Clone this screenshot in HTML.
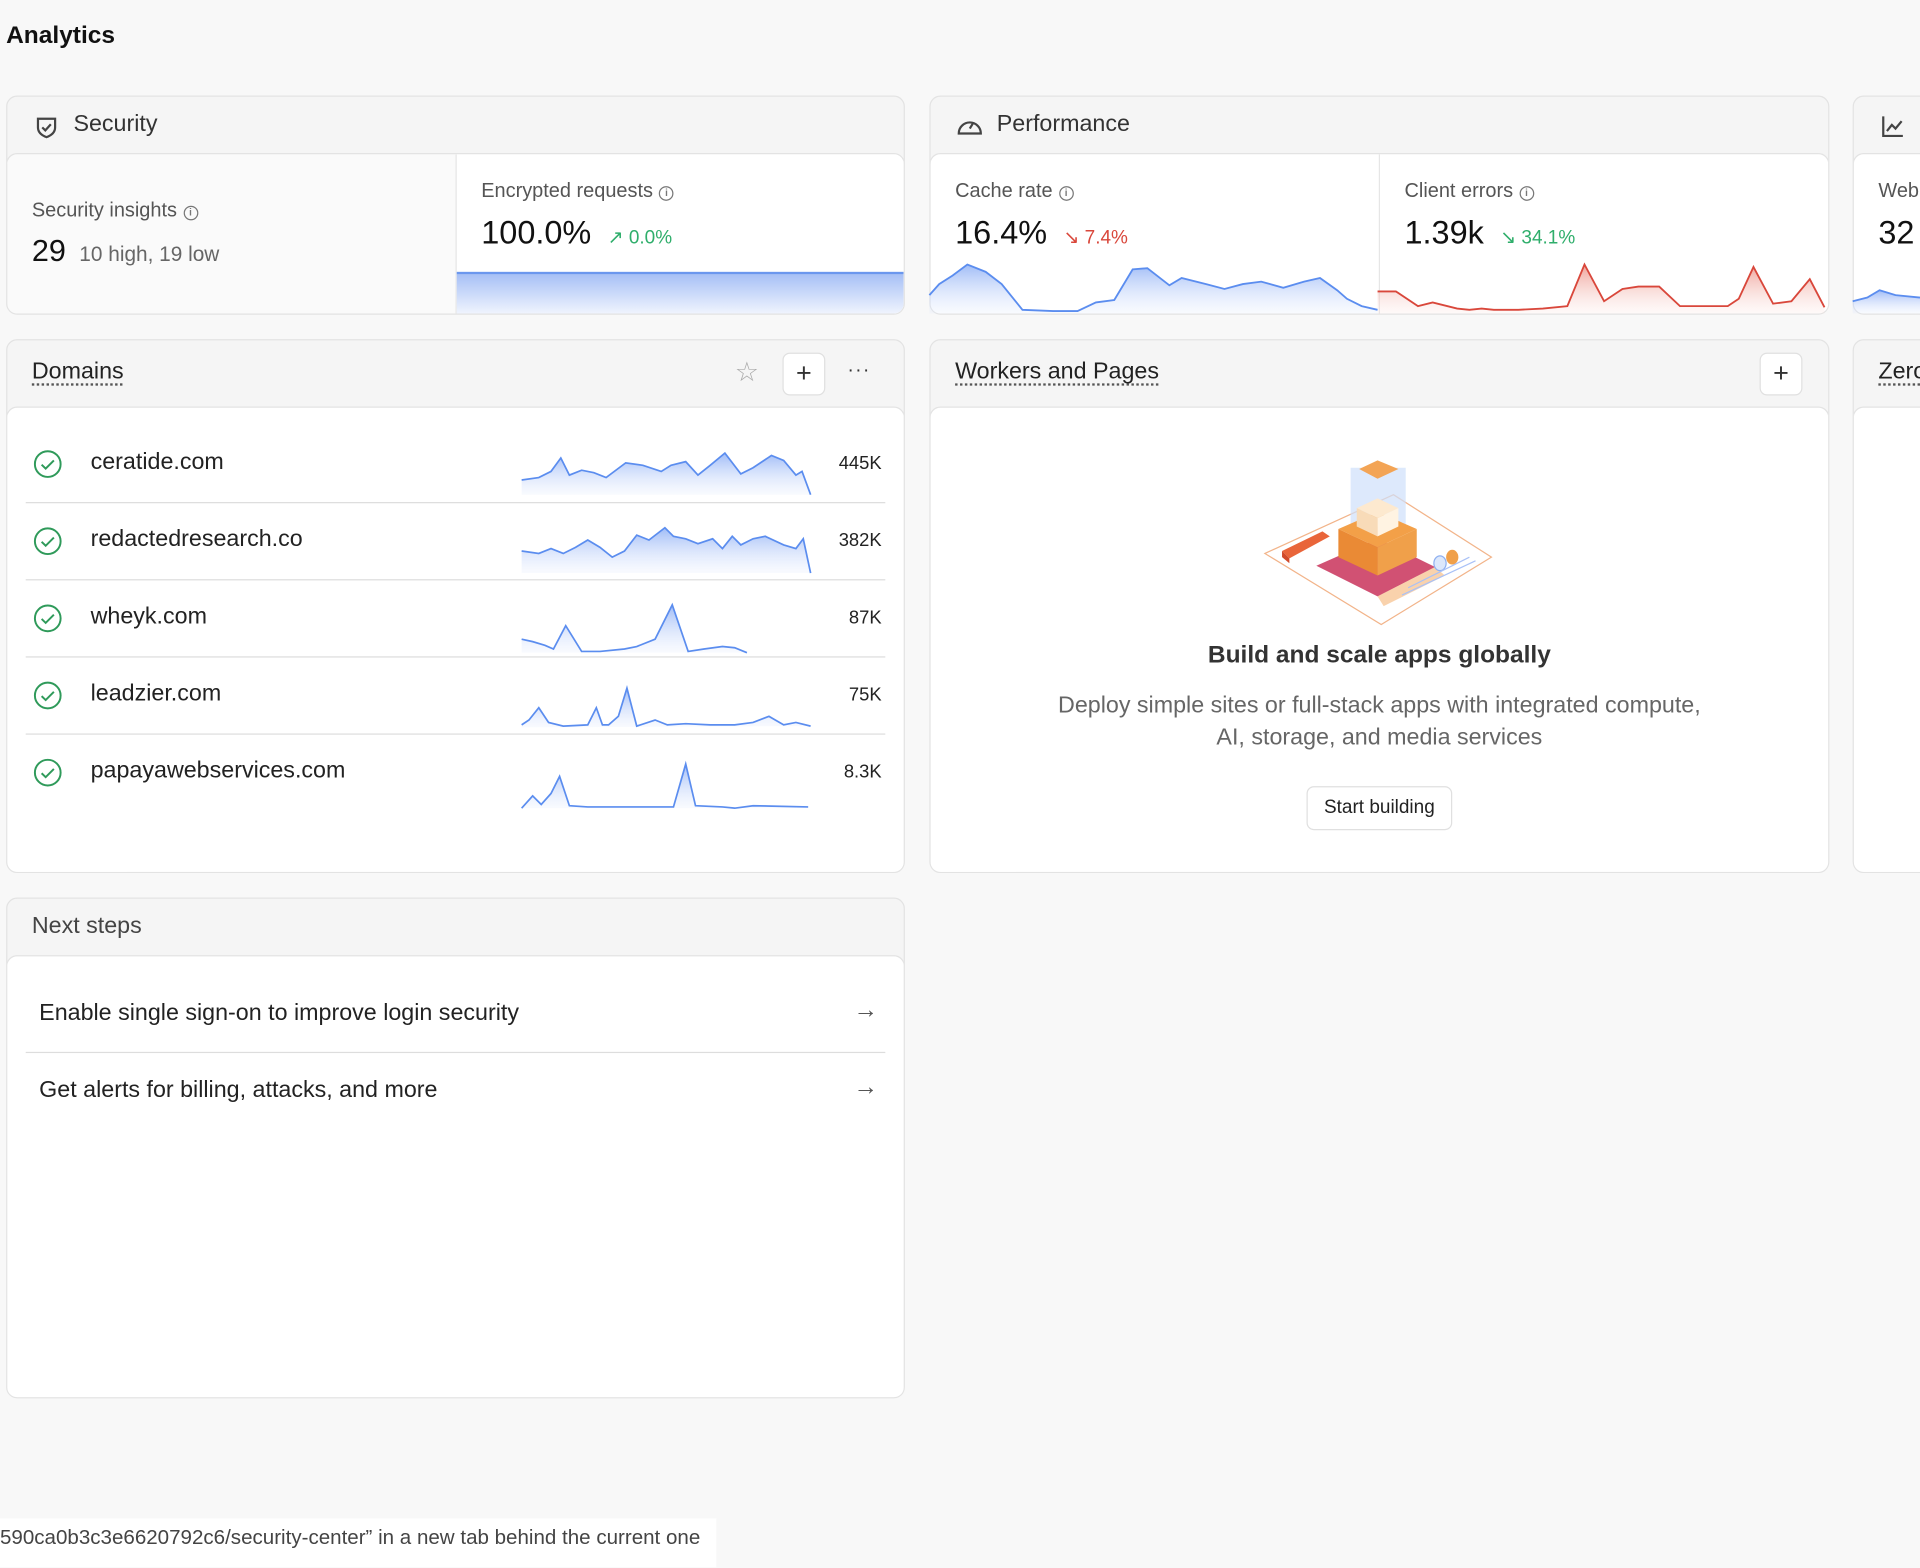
<!DOCTYPE html>
<html><head><meta charset="utf-8"><style>
*{box-sizing:border-box;margin:0;padding:0}
html,body{width:1920px;height:1568px;overflow:hidden;background:#f8f8f8}
body{font-family:"Liberation Sans",sans-serif;color:#222}
#w{position:absolute;left:0;top:0;width:1568px;height:1280px;transform:scale(1.22449);transform-origin:0 0}
.a{position:absolute}
.card{position:absolute;border:1px solid #e3e3e3;border-radius:9px;background:#f5f5f5;overflow:hidden}
.body{position:absolute;left:-1px;right:-1px;bottom:-1px;background:#fff;border:1px solid #e3e3e3;border-radius:9px;overflow:hidden}
.ht{font-size:19px;color:#333}
.ul{text-decoration:underline dotted #555;text-underline-offset:5px;color:#222}
.lbl{font-size:16.3px;color:#555}
.big{font-size:26.5px;color:#111}
.i{display:inline-block;width:12px;height:12px;border:1.3px solid #777;border-radius:50%;font-size:8px;line-height:10px;text-align:center;color:#777;vertical-align:1px;margin-left:5px;font-weight:bold}
.row{position:absolute;left:15px;right:15px;height:63px;border-bottom:1px solid #ddd}
.row .nm{position:absolute;left:53px;top:19px;font-size:19px}
.row .v{position:absolute;right:3px;top:22px;font-size:15px}
.row svg.c{position:absolute;left:6px;top:19px}
.btn{position:absolute;background:#fff;border:1px solid #e0e0e0;border-radius:6px;text-align:center}
</style></head><body><div id="w">
<svg width="0" height="0" class="a"><defs>
<linearGradient id="gb" x1="0" y1="0" x2="0" y2="1"><stop offset="0" stop-color="#8fb0f5" stop-opacity=".85"/><stop offset="1" stop-color="#dfe8fd" stop-opacity=".2"/></linearGradient>
<linearGradient id="gr" x1="0" y1="0" x2="0" y2="1"><stop offset="0" stop-color="#eb8b80" stop-opacity=".8"/><stop offset="1" stop-color="#fbe3e0" stop-opacity=".2"/></linearGradient>
</defs></svg>

<div class="a" style="left:5px;top:18px;font-size:20px;font-weight:bold;color:#111">Analytics</div>

<!-- Security -->
<div class="card" style="left:5px;top:78px;width:734px;height:179px">
 <svg class="a" style="left:22px;top:15px" width="20" height="20" viewBox="0 0 20 20" fill="none" stroke="#444" stroke-width="1.8"><path d="M3 3h14v7c0 4-3 6.5-7 8-4-1.5-7-4-7-8z"/><path d="M6.5 10l2.5 2.5 4.5-5"/></svg>
 <div class="a ht" style="left:54px;top:12px">Security</div>
 <div class="body" style="top:46px;height:133px;background:#fafafa">
  <div class="a lbl" style="left:20px;top:37px">Security insights<span class="i">i</span></div>
  <div class="a" style="left:20px;top:65px;font-size:25px;color:#111">29 <span style="font-size:17px;color:#666;margin-left:4px">10 high, 19 low</span></div>
  <div class="a" style="left:366px;top:0;right:0;bottom:0;background:#fff;border-left:1px solid #e6e6e6">
   <div class="a lbl" style="left:20px;top:21px">Encrypted requests<span class="i">i</span></div>
   <div class="a big" style="left:20px;top:49px">100.0% <span style="font-size:15.5px;color:#2fae6b;margin-left:6px">↗ 0.0%</span></div>
   <div class="a" style="left:0;right:0;top:96px;height:36px;border-top:2px solid #6b97ee;background:linear-gradient(#a7c0f6,#f4f7fe)"></div>
  </div>
 </div>
</div>

<!-- Performance -->
<div class="card" style="left:759px;top:78px;width:735px;height:179px">
 <svg class="a" style="left:21px;top:14px" width="22" height="20" viewBox="0 0 22 20" fill="none" stroke="#444" stroke-width="1.8"><path d="M2 16a9 9 0 1 1 18 0z"/><path d="M11 12l3-5"/></svg>
 <div class="a ht" style="left:54px;top:12px">Performance</div>
 <div class="body" style="top:46px;height:133px">
  <div class="a lbl" style="left:20px;top:21px">Cache rate<span class="i">i</span></div>
  <div class="a big" style="left:20px;top:49px">16.4% <span style="font-size:15.5px;color:#d9473b;margin-left:6px">↘ 7.4%</span></div>
  <div class="a" style="left:366px;top:0;bottom:0;border-left:1px solid #e6e6e6"></div>
  <div class="a lbl" style="left:387px;top:21px">Client errors<span class="i">i</span></div>
  <div class="a big" style="left:387px;top:49px">1.39k <span style="font-size:15.5px;color:#2fae6b;margin-left:6px">↘ 34.1%</span></div>
 </div>
</div>
<svg class="a" style="left:0;top:0" width="1568" height="260">
<polygon fill="url(#gb)" points="759,256 759,241 767,232 778,225 790,216 805,222 818,232 835,253 860,254 880,254 895,247 910,245 925,220 937,219 955,233 965,227 985,232 1000,236 1015,232 1030,230 1048,235 1065,230 1078,227 1092,237 1100,244 1112,250 1125,253 1125,256"/>
<polyline fill="none" stroke="#5b8def" stroke-width="1.5" points="759,241 767,232 778,225 790,216 805,222 818,232 835,253 860,254 880,254 895,247 910,245 925,220 937,219 955,233 965,227 985,232 1000,236 1015,232 1030,230 1048,235 1065,230 1078,227 1092,237 1100,244 1112,250 1125,253"/>
<polygon fill="url(#gr)" points="1125,256 1125,238 1140,238 1158,250 1170,247 1190,252 1200,253 1210,252 1220,253 1240,253 1260,252 1280,250 1294,216 1310,246 1325,236 1338,234 1355,234 1372,250 1393,250 1411,250 1420,244 1432,218 1448,248 1463,246 1478,228 1490,251 1490,256"/>
<polyline fill="none" stroke="#d9473b" stroke-width="1.5" points="1125,238 1140,238 1158,250 1170,247 1190,252 1200,253 1210,252 1220,253 1240,253 1260,252 1280,250 1294,216 1310,246 1325,236 1338,234 1355,234 1372,250 1393,250 1411,250 1420,244 1432,218 1448,248 1463,246 1478,228 1490,251"/>
</svg>

<!-- third card -->
<div class="card" style="left:1513px;top:78px;width:120px;height:179px">
 <svg class="a" style="left:22px;top:14px" width="20" height="20" viewBox="0 0 20 20" fill="none" stroke="#444" stroke-width="1.8"><path d="M2 2v16h16"/><path d="M5 14l4-5 3 3 5-6"/></svg>
 <div class="body" style="top:46px;height:133px">
  <div class="a lbl" style="left:20px;top:21px">Web</div>
  <div class="a big" style="left:20px;top:49px">32</div>
 </div>
</div>
<svg class="a" style="left:0;top:0" width="1568" height="260"><polygon fill="url(#gb)" points="1513,256 1513,246 1525,243 1535,237 1548,241 1568,243 1568,256"/><polyline fill="none" stroke="#5b8def" stroke-width="1.5" points="1513,246 1525,243 1535,237 1548,241 1568,243"/></svg>
<div class="card" style="left:1513px;top:277px;width:120px;height:436px">
 <div class="a ht ul" style="left:20px;top:15px">Zero</div>
 <div class="body" style="top:54px;height:382px"></div>
</div>

<!-- Domains -->
<div class="card" style="left:5px;top:277px;width:734px;height:436px">
 <div class="a ht ul" style="left:20px;top:15px">Domains</div>
 <div class="a" style="left:594px;top:13px;font-size:22px;color:#aaa">☆</div>
 <div class="btn" style="left:633px;top:10px;width:35px;height:35px;font-size:22px;line-height:32px;color:#333">+</div>
 <div class="a" style="left:686px;top:16px;font-size:16px;color:#333;letter-spacing:1px">···</div>
 <div class="body" style="top:54px;height:382px">
  <div class="row" style="top:15px">
   <svg class="c" width="24" height="24"><circle cx="12" cy="12" r="10.5" fill="none" stroke="#2f9a5a" stroke-width="1.6"/><path d="M7 12.5l3.3 3.2L17 9" fill="none" stroke="#2f9a5a" stroke-width="1.6"/></svg>
   <div class="nm">ceratide.com</div><div class="v">445K</div>
  </div>
  <div class="row" style="top:78px">
   <svg class="c" width="24" height="24"><circle cx="12" cy="12" r="10.5" fill="none" stroke="#2f9a5a" stroke-width="1.6"/><path d="M7 12.5l3.3 3.2L17 9" fill="none" stroke="#2f9a5a" stroke-width="1.6"/></svg>
   <div class="nm">redactedresearch.co</div><div class="v">382K</div>
  </div>
  <div class="row" style="top:141px">
   <svg class="c" width="24" height="24"><circle cx="12" cy="12" r="10.5" fill="none" stroke="#2f9a5a" stroke-width="1.6"/><path d="M7 12.5l3.3 3.2L17 9" fill="none" stroke="#2f9a5a" stroke-width="1.6"/></svg>
   <div class="nm">wheyk.com</div><div class="v">87K</div>
  </div>
  <div class="row" style="top:204px">
   <svg class="c" width="24" height="24"><circle cx="12" cy="12" r="10.5" fill="none" stroke="#2f9a5a" stroke-width="1.6"/><path d="M7 12.5l3.3 3.2L17 9" fill="none" stroke="#2f9a5a" stroke-width="1.6"/></svg>
   <div class="nm">leadzier.com</div><div class="v">75K</div>
  </div>
  <div class="row" style="top:267px;border-bottom:none">
   <svg class="c" width="24" height="24"><circle cx="12" cy="12" r="10.5" fill="none" stroke="#2f9a5a" stroke-width="1.6"/><path d="M7 12.5l3.3 3.2L17 9" fill="none" stroke="#2f9a5a" stroke-width="1.6"/></svg>
   <div class="nm">papayawebservices.com</div><div class="v">8.3K</div>
  </div>
 </div>
</div>
<svg class="a" style="left:0;top:0" width="740" height="720">
<g fill="url(#gb)">
<polygon points="426,404 426,392 440,390 450,385 458,374 465,388 475,384 485,386 495,390 511,378 525,380 540,385 548,380 560,377 570,388 580,380 592,370 605,387 615,382 630,372 640,376 650,388 655,385 662,404"/>
<polygon points="426,468 426,450 440,452 450,448 460,452 470,447 480,441 490,447 500,455 510,450 520,437 530,441 543,431 550,438 560,440 570,444 582,440 590,448 598,438 605,445 615,440 625,438 640,445 650,448 656,440 662,468"/>
<polygon points="426,533 426,522 435,524 445,527 452,530 462,511 475,532 490,532 510,530 520,528 535,522 549,494 562,532 575,530 590,528 600,529 610,533"/>
<polygon points="426,594 426,592 432,588 440,578 448,590 460,593 480,592 487,578 492,592 497,592 505,585 512,562 520,593 535,588 545,592 560,591 580,592 600,592 615,590 628,585 640,592 650,590 662,593"/>
<polygon points="426,660 435,650 442,657 450,648 457,634 465,658 480,659 550,659 560,624 568,658 590,659 600,660 615,658 660,659 660,660"/>
</g>
<g fill="none" stroke="#5b8def" stroke-width="1.4">
<polyline points="426,392 440,390 450,385 458,374 465,388 475,384 485,386 495,390 511,378 525,380 540,385 548,380 560,377 570,388 580,380 592,370 605,387 615,382 630,372 640,376 650,388 655,385 662,404"/>
<polyline points="426,450 440,452 450,448 460,452 470,447 480,441 490,447 500,455 510,450 520,437 530,441 543,431 550,438 560,440 570,444 582,440 590,448 598,438 605,445 615,440 625,438 640,445 650,448 656,440 662,468"/>
<polyline points="426,522 435,524 445,527 452,530 462,511 475,532 490,532 510,530 520,528 535,522 549,494 562,532 575,530 590,528 600,529 610,533"/>
<polyline points="426,592 432,588 440,578 448,590 460,593 480,592 487,578 492,592 497,592 505,585 512,562 520,593 535,588 545,592 560,591 580,592 600,592 615,590 628,585 640,592 650,590 662,593"/>
<polyline points="426,660 435,650 442,657 450,648 457,634 465,658 480,659 550,659 560,624 568,658 590,659 600,660 615,658 660,659"/>
</g></svg>

<!-- Workers -->
<div class="card" style="left:759px;top:277px;width:735px;height:436px">
 <div class="a ht ul" style="left:20px;top:15px">Workers and Pages</div>
 <div class="btn" style="left:677px;top:10px;width:35px;height:35px;font-size:22px;line-height:32px;color:#333">+</div>
 <div class="body" style="top:54px;height:382px;text-align:center">
  <div class="a" style="left:0;right:0;top:191px;font-size:20px;font-weight:bold;color:#333">Build and scale apps globally</div>
  <div class="a" style="left:0;right:0;top:231px;font-size:19px;color:#666;line-height:26px">Deploy simple sites or full-stack apps with integrated compute,<br>AI, storage, and media services</div>
  <div class="btn" style="left:307px;top:309px;width:119px;height:36px;font-size:15.5px;line-height:34px;color:#222">Start building</div>
 </div>
</div>
<svg class="a" style="left:0;top:0" width="1568" height="520">
<polygon points="1033,452 1138,404 1218,455 1128,510" fill="none" stroke="#f2b48a" stroke-width="1"/>
<polygon points="1075,462 1125,440 1172,463 1125,487" fill="#c9325a" opacity=".85"/>
<polygon points="1125,487 1172,463 1180,470 1130,495" fill="#f4a55a" opacity=".5"/>
<rect x="1103" y="382" width="45" height="52" fill="#cfe0fb" opacity=".7"/>
<polygon points="1093,432 1125,418 1157,432 1125,447" fill="#f3a048"/>
<polygon points="1093,432 1125,447 1125,470 1093,455" fill="#ea8a35"/>
<polygon points="1125,447 1157,432 1157,455 1125,470" fill="#f0a04a"/>
<polygon points="1108,415 1125,407 1142,415 1125,423" fill="#fde9cf"/>
<polygon points="1108,415 1125,423 1125,438 1108,430" fill="#f8dbb8"/>
<polygon points="1125,423 1142,415 1142,430 1125,438" fill="#fff3e2"/>
<polygon points="1110,383 1125,376 1142,383 1125,391" fill="#f3a455"/>
<polygon points="1047,450 1080,434 1086,438 1053,456" fill="#e9653a"/>
<polygon points="1047,450 1053,456 1053,460 1047,455" fill="#d14a2a"/>
<ellipse cx="1176" cy="460" rx="5" ry="6" fill="#dce8fc" stroke="#8fb0f0"/>
<ellipse cx="1186" cy="455" rx="5" ry="6" fill="#f0a04a"/>
<path d="M1150 480 L1200 455 M1145 486 L1205 458" stroke="#a9c1f7" fill="none"/>
</svg>

<!-- Next steps -->
<div class="card" style="left:5px;top:733px;width:734px;height:409px">
 <div class="a" style="left:20px;top:12px;font-size:19px;color:#444">Next steps</div>
 <div class="body" style="top:46px;height:363px">
  <div class="a" style="left:15px;right:15px;top:16px;height:63px;border-bottom:1px solid #ddd">
   <div class="a" style="left:11px;top:20px;font-size:19px;color:#222">Enable single sign-on to improve login security</div>
   <div class="a" style="right:6px;top:17px;font-size:20px;color:#555">→</div>
  </div>
  <div class="a" style="left:15px;right:15px;top:79px;height:63px">
   <div class="a" style="left:11px;top:20px;font-size:19px;color:#222">Get alerts for billing, attacks, and more</div>
   <div class="a" style="right:6px;top:17px;font-size:20px;color:#555">→</div>
  </div>
 </div>
</div>

<div class="a" style="left:0;top:1240px;width:585px;height:40px;background:#fff;font-size:16.8px;color:#444;padding-top:6px;white-space:nowrap">590ca0b3c3e6620792c6/security-center” in a new tab behind the current one</div>
</div></body></html>
